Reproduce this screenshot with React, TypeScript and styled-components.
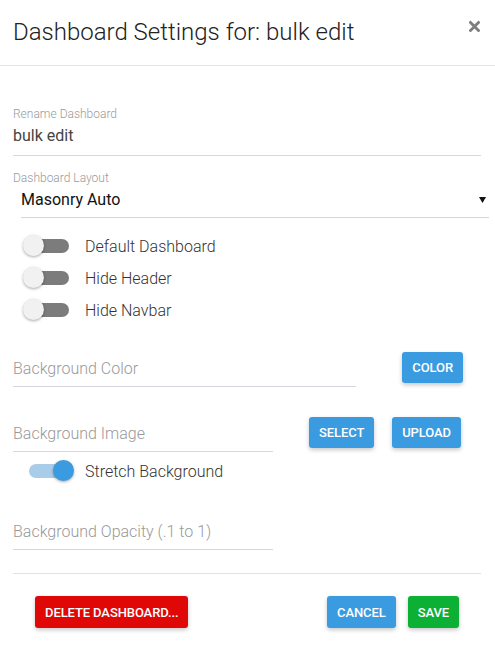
import React, {useState} from 'react';
import styled, {createGlobalStyle} from 'styled-components';

const GlobalStyle = createGlobalStyle`
    html, body {
        margin: 0;
        padding: 0;
        background: #fff;
    }

    body {
        font-family: Roboto, "Liberation Sans", Arial, sans-serif;
        color: #444;
    }
`

const Modal = styled.div`
    width: 495px;
    min-height: 663px;
    background: #fff;
`

const Header = styled.div`
    height: 65px;
    display: flex;
    align-items: flex-start;
    justify-content: space-between;
    padding: 0 15px 0 13px;
    border-bottom: 1px solid #e5e5e5;
`

const Title = styled.h4`
    margin: 17px 0 0;
    font-size: 24px;
    line-height: 30px;
    font-weight: 300;
    color: #222;
`

const Close = styled.button`
    margin-top: 20px;
    padding: 0;
    border: none;
    background: none;
    width: 11px;
    height: 12px;
    cursor: pointer;
    display: flex;
`

const Body = styled.div`
    padding: 0 14px 0 13px;
`

const Field = styled.div<{ top: number }>`
    margin-top: ${p => p.top}px;
`

const Label = styled.div`
    font-size: 12px;
    line-height: 14px;
    color: #9a9a9a;
    font-weight: 300;
`

const TextValue = styled.div`
    margin-top: 5px;
    font-size: 16px;
    line-height: 20px;
    color: #444;
    padding-bottom: 9px;
    border-bottom: 1px solid #d4d8dd;
`

const SelectBox = styled.div`
    display: flex;
    align-items: center;
    justify-content: space-between;
    margin: 0 -8px 0 8px;
    padding: 5px 0 7px;
    font-size: 16px;
    line-height: 20px;
    color: #111;
    border-bottom: 1px solid #d4d8dd;

    svg {
        margin-right: 3px;
    }
`

const Toggles = styled.div`
    margin-top: 12px;
`

const ToggleRow = styled.label<{ indent: number; top?: number }>`
    display: flex;
    align-items: center;
    height: 32px;
    margin-top: ${p => p.top || 0}px;
    padding-left: ${p => p.indent}px;
    font-size: 16px;
    font-weight: 300;
    color: #333;
    cursor: pointer;
`

const Track = styled.span<{ on: boolean }>`
    position: relative;
    display: inline-block;
    width: ${p => p.on ? 40 : 45}px;
    height: 14px;
    border-radius: 7px;
    margin-right: 16px;
    background: ${p => p.on ? '#a9cde9' : '#7c7c7c'};
`

const Thumb = styled.span<{ on: boolean }>`
    position: absolute;
    top: -4px;
    left: ${p => p.on ? 24 : -1}px;
    width: 21px;
    height: 21px;
    border-radius: 50%;
    background: ${p => p.on ? '#3b9be0' : '#f1f1f1'};
    box-shadow: 0 1px 3px rgba(0, 0, 0, 0.35);
`

const InputRow = styled.div<{ top: number }>`
    display: flex;
    align-items: flex-start;
    margin-top: ${p => p.top}px;

    & > button {
        margin-top: 1px;
    }
`

const Placeholder = styled.div<{ width: number }>`
    width: ${p => p.width}px;
    padding: 8px 0 7px;
    font-size: 16px;
    line-height: 20px;
    font-weight: 300;
    color: #999;
    border-bottom: 1px solid #d4d8dd;
`

const Button = styled.button<{ color?: string; left?: number; h?: number }>`
    height: ${p => p.h || 31}px;
    margin-left: ${p => p.left || 0}px;
    padding: 0 10px;
    border: none;
    border-radius: 3px;
    background: ${p => p.color || '#3b9be0'};
    color: #fff;
    font-family: Roboto, "Liberation Sans", Arial, sans-serif;
    font-size: 13px;
    font-weight: 500;
    letter-spacing: -0.1px;
    box-shadow: 0 2px 4px rgba(0, 0, 0, 0.22);
    cursor: pointer;
`

const Divider = styled.div`
    margin-top: 23px;
    border-top: 1px solid #e2e2e2;
`

const Footer = styled.div`
    display: flex;
    align-items: center;
    margin-top: 22px;
    padding: 0 22px;
`

const Spacer = styled.div`
    flex: 1;
`

function Toggle({label, on, indent, top, onClick}: {
    label: string, on: boolean, indent: number, top?: number, onClick: () => void
}) {
    return (
        <ToggleRow indent={indent} top={top} onClick={onClick}>
            <Track on={on}><Thumb on={on}/></Track>
            {label}
        </ToggleRow>
    )
}

function App() {
    const [flags, setFlags] = useState({def: false, header: false, navbar: false, stretch: true})
    const flip = (k: keyof typeof flags) => setFlags({...flags, [k]: !flags[k]})

    return (
        <Modal>
            <GlobalStyle/>
            <Header>
                <Title>Dashboard Settings for: bulk edit</Title>
                <Close aria-label="close">
                    <svg width="11" height="12" viewBox="0 0 11 12">
                        <path d="M1.5 2.5 L9.5 10.5 M9.5 2.5 L1.5 10.5" stroke="#7d7d7d" strokeWidth="2.8" strokeLinecap="square"/>
                    </svg>
                </Close>
            </Header>
            <Body>
                <Field top={41}>
                    <Label>Rename Dashboard</Label>
                    <TextValue>bulk edit</TextValue>
                </Field>
                <Field top={15}>
                    <Label>Dashboard Layout</Label>
                    <SelectBox>
                        Masonry Auto
                        <svg width="7" height="6" viewBox="0 0 7 6">
                            <polygon points="0,0 7,0 3.5,6" fill="#111"/>
                        </svg>
                    </SelectBox>
                </Field>
                <Toggles>
                    <Toggle label="Default Dashboard" indent={11} on={flags.def} onClick={() => flip('def')}/>
                    <Toggle label="Hide Header" indent={11} on={flags.header} onClick={() => flip('header')}/>
                    <Toggle label="Hide Navbar" indent={11} on={flags.navbar} onClick={() => flip('navbar')}/>
                </Toggles>

                <InputRow top={25}>
                    <Placeholder width={343}>Background Color</Placeholder>
                    <Spacer/>
                    <Button style={{marginRight: 18}}>COLOR</Button>
                </InputRow>

                <InputRow top={29}>
                    <Placeholder width={260}>Background Image</Placeholder>
                    <Button left={36}>SELECT</Button>
                    <Button left={18}>UPLOAD</Button>
                </InputRow>

                <Toggle label="Stretch Background" indent={16} top={3} on={flags.stretch}
                        onClick={() => flip('stretch')}/>

                <InputRow top={27}>
                    <Placeholder width={260}>Background Opacity (.1 to 1)</Placeholder>
                </InputRow>

                <Divider/>
                <Footer>
                    <Button color="#e00707" h={32}>DELETE DASHBOARD...</Button>
                    <Spacer/>
                    <Button h={32}>CANCEL</Button>
                    <Button color="#0bb035" h={32} left={12}>SAVE</Button>
                </Footer>
            </Body>
        </Modal>
    );
}

export default App;
